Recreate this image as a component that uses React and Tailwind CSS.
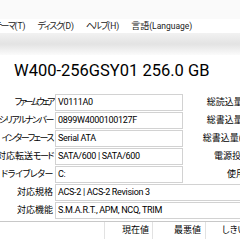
import React from 'react'

// ── Datos ─────────────────────────────────────────────────────
const MENU = ['テーマ(T)', 'ディスク(D)', 'ヘルプ(H)', '言語(Language)']

const ROWS = [
  { label: 'ファームウェア', value: 'V0111A0', right: '総読込量 (ホスト)', kana: 'tracking-[-2.5px]' },
  { label: 'シリアルナンバー', value: '0899W4000100127F', right: '総書込量 (ホスト)' },
  { label: 'インターフェース', value: 'Serial ATA', right: '総書込量 (NAND)' },
  { label: '対応転送モード', value: 'SATA/600 | SATA/600', right: '電源投入回数' },
  { label: 'ドライブレター', value: 'C:', right: '使用時間', pad: 'pr-[5px]', kana: 'tracking-[-0.5px]' },
  { label: '対応規格', value: 'ACS-2 | ACS-2 Revision 3', full: true },
  { label: '対応機能', value: 'S.M.A.R.T., APM, NCQ, TRIM', full: true },
]

// Texto japonés: katakana más estrecha (como Meiryo UI)
const JP_RE = /([\u30A0-\u30FF]+|[\u3040-\u309F\u4E00-\u9FFF]+)/

function Jp({ text, kana = 'tracking-[-1.5px]' }) {
  return text.split(JP_RE).map((part, i) => {
    if (!part) return null
    if (/^[\u30A0-\u30FF]+$/.test(part))
      return <span key={i} className={`text-[9px] ${kana}`}>{part}</span>
    if (/^[\u3040-\u309F\u4E00-\u9FFF]+$/.test(part))
      return <span key={i} className="text-[9px]">{part}</span>
    return <span key={i}>{part}</span>
  })
}

function InfoRow({ label, value, right, full, pad = '', kana }) {
  return (
    <div className="flex h-[17px] items-stretch">
      <div className="w-[53px] shrink-0 flex justify-end items-center">
        <span className="shrink-0 whitespace-nowrap"><Jp text={label} kana={kana} /></span>
      </div>
      <div
        className={`ml-[2px] shrink-0 border border-[#d2d2d2] px-[2px] flex items-center whitespace-nowrap text-[9px] tracking-[-0.3px] ${
          full ? 'w-[230px]' : 'w-[128px]'
        }`}
      >
        {value}
      </div>
      {!full && (
        <div className={`w-[85px] shrink-0 flex justify-end items-center whitespace-nowrap ${pad}`}>
          <Jp text={right} />
        </div>
      )}
    </div>
  )
}

export default function App() {
  return (
    <div className="w-[240px] h-[240px] overflow-hidden bg-white text-[8.5px] leading-none text-black font-['Roboto','Noto_Sans_CJK_JP',sans-serif] [font-feature-settings:'palt']">
      {/* Barra superior */}
      <div className="h-[19px] bg-[#fafafa]" />

      {/* Menú */}
      <div className="h-[14px] bg-white flex items-center text-[#222] whitespace-nowrap">
        <div className="flex gap-[12px] -ml-[6px]">
          {MENU.map((m) => (
            <span key={m}><Jp text={m} /></span>
          ))}
        </div>
      </div>

      {/* Barra de discos */}
      <div className="h-[22px] bg-gradient-to-b from-[#f2f2f2] via-[#e3e3e3] to-[#fbfbfb]" />

      {/* Título */}
      <div className="h-[32px] flex items-center pl-[14px] text-[16.5px] whitespace-nowrap">
        W400-256GSY01 256.0 GB
      </div>

      {/* Información */}
      <div className="mt-[7px] flex flex-col gap-[1px]">
        {ROWS.map((r) => (
          <InfoRow key={r.label} {...r} />
        ))}
      </div>

      {/* Tabla SMART */}
      <div className="mt-[2px] border-t border-[#c8c8c8]">
        <div className="flex h-[17px] whitespace-nowrap">
          <div className="w-[105px] shrink-0 border-r border-[#e2e2e2]" />
          <div className="w-[48px] shrink-0 border-r border-[#e2e2e2] flex items-center justify-end pr-[3px]"><Jp text="現在値" /></div>
          <div className="w-[53px] shrink-0 border-r border-[#e2e2e2] flex items-center justify-end pr-[4px]"><Jp text="最悪値" /></div>
          <div className="flex-1 flex items-center pl-[16px]"><Jp text="しきい値" /></div>
        </div>
        <div className="flex h-[14px] whitespace-nowrap pt-[1px] text-[9px]">
          <div className="w-[105px] shrink-0" />
          <div className="w-[48px] shrink-0 text-right pr-[4px]">100</div>
          <div className="w-[53px] shrink-0 text-right pr-[4px]">100</div>
        </div>
      </div>
    </div>
  )
}
